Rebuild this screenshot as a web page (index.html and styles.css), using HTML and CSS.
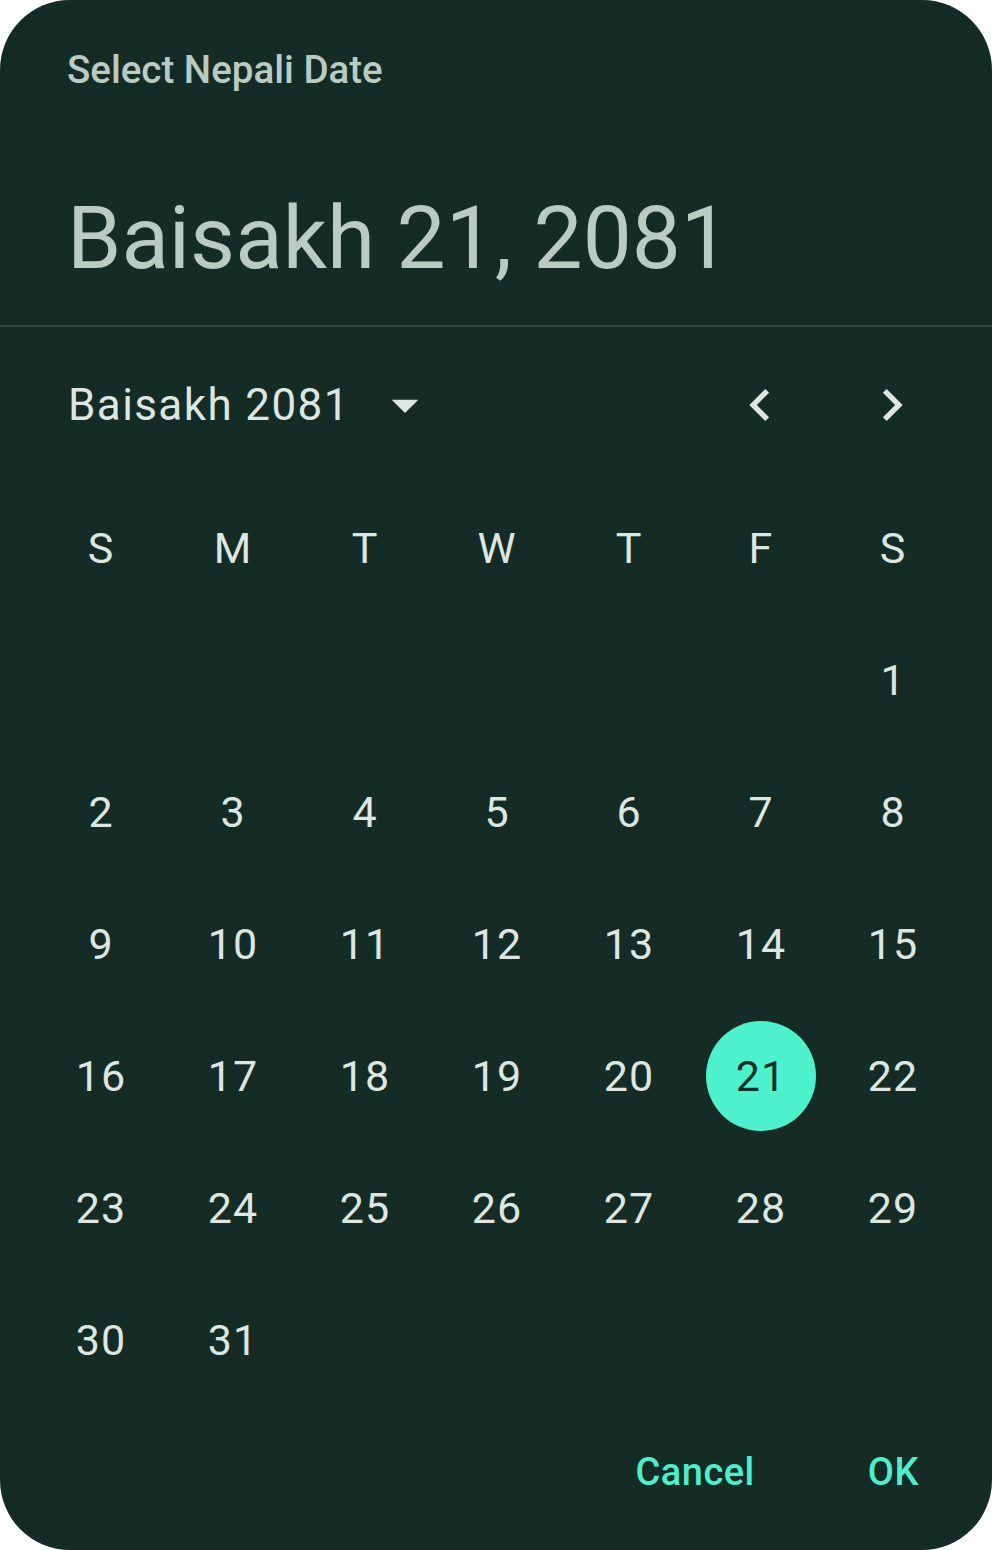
FILE: index.html
```html
<!DOCTYPE html>
<html>
<head>
<meta charset="utf-8">
<link rel="stylesheet" href="styles.css">
</head>
<body>
<div class="dialog">
  <div class="header">
    <div class="title">Select Nepali Date</div>
    <div class="big-date">Baisakh 21, 2081</div>
  </div>
  <div class="divider"></div>
  <div class="month-row">
    <div class="month-label">Baisakh 2081</div>
    <svg class="drop" viewBox="0 0 24 24"><path d="M7 10l5 5 5-5z"/></svg>
    <div class="nav">
      <svg class="chev" viewBox="0 0 24 24"><path d="M15.41 7.41L14 6l-6 6 6 6 1.41-1.41L10.83 12z"/></svg>
      <svg class="chev" viewBox="0 0 24 24"><path d="M10 6L8.59 7.41 13.17 12l-4.58 4.59L10 18l6-6z"/></svg>
    </div>
  </div>
  <div class="grid">
    <div class="cell wd">S</div><div class="cell wd">M</div><div class="cell wd">T</div><div class="cell wd">W</div><div class="cell wd">T</div><div class="cell wd">F</div><div class="cell wd">S</div>
    <div class="cell"></div><div class="cell"></div><div class="cell"></div><div class="cell"></div><div class="cell"></div><div class="cell"></div><div class="cell">1</div>
    <div class="cell">2</div><div class="cell">3</div><div class="cell">4</div><div class="cell">5</div><div class="cell">6</div><div class="cell">7</div><div class="cell">8</div>
    <div class="cell">9</div><div class="cell">10</div><div class="cell">11</div><div class="cell">12</div><div class="cell">13</div><div class="cell">14</div><div class="cell">15</div>
    <div class="cell">16</div><div class="cell">17</div><div class="cell">18</div><div class="cell">19</div><div class="cell">20</div><div class="cell"><span class="sel">21</span></div><div class="cell">22</div>
    <div class="cell">23</div><div class="cell">24</div><div class="cell">25</div><div class="cell">26</div><div class="cell">27</div><div class="cell">28</div><div class="cell">29</div>
    <div class="cell">30</div><div class="cell">31</div>
  </div>
  <div class="actions">
    <div class="btn">Cancel</div>
    <div class="btn">OK</div>
  </div>
</div>
</body>
</html>
```
FILE: styles.css
```css
html, body {
  margin: 0;
  padding: 0;
  background: #ffffff;
}
.dialog {
  width: 992px;
  height: 1550px;
  background: #152b26;
  border-radius: 70px;
  overflow: hidden;
  font-family: Roboto, "Noto Sans", sans-serif;
  display: flex;
  flex-direction: column;
}
.header {
  height: 325px;
  padding-left: 67px;
  box-sizing: border-box;
}
.title {
  padding-top: 46px;
  font-size: 38.5px;
  font-weight: 500;
  line-height: 48px;
  color: #b9cbc2;
}
.big-date {
  margin-top: 94px;
  font-size: 87.3px;
  line-height: 100px;
  color: #b9cbc2;
}
.divider {
  height: 2px;
  background: #34463f;
}
.month-row {
  height: 156px;
  display: flex;
  align-items: center;
  padding-left: 68px;
  padding-right: 68px;
}
.month-label {
  font-size: 44px;
  color: #dde6e1;
  letter-spacing: 1.4px;
  width: 305px;
}
.drop {
  width: 64px;
  height: 64px;
  fill: #dde6e1;
}
.nav {
  margin-left: auto;
  display: flex;
  gap: 68px;
}
.chev {
  width: 64px;
  height: 64px;
  fill: #dde6e1;
}
.grid {
  display: grid;
  grid-template-columns: repeat(7, 132px);
  grid-auto-rows: 132px;
  padding-left: 35px;
  margin-top: -1px;
}
.cell {
  display: flex;
  align-items: center;
  justify-content: center;
  font-size: 43px;
  color: #dde6e1;
  letter-spacing: 1px;
}
.sel {
  width: 110px;
  height: 110px;
  border-radius: 50%;
  background: #4df2cd;
  color: #12302a;
  display: flex;
  align-items: center;
  justify-content: center;
}
.actions {
  height: 132px;
  display: flex;
  justify-content: flex-end;
  align-items: center;
  padding-right: 73px;
  gap: 113px;
}
.btn {
  font-size: 38px;
  font-weight: 500;
  letter-spacing: 0.5px;
  color: #4deecb;
}
```
